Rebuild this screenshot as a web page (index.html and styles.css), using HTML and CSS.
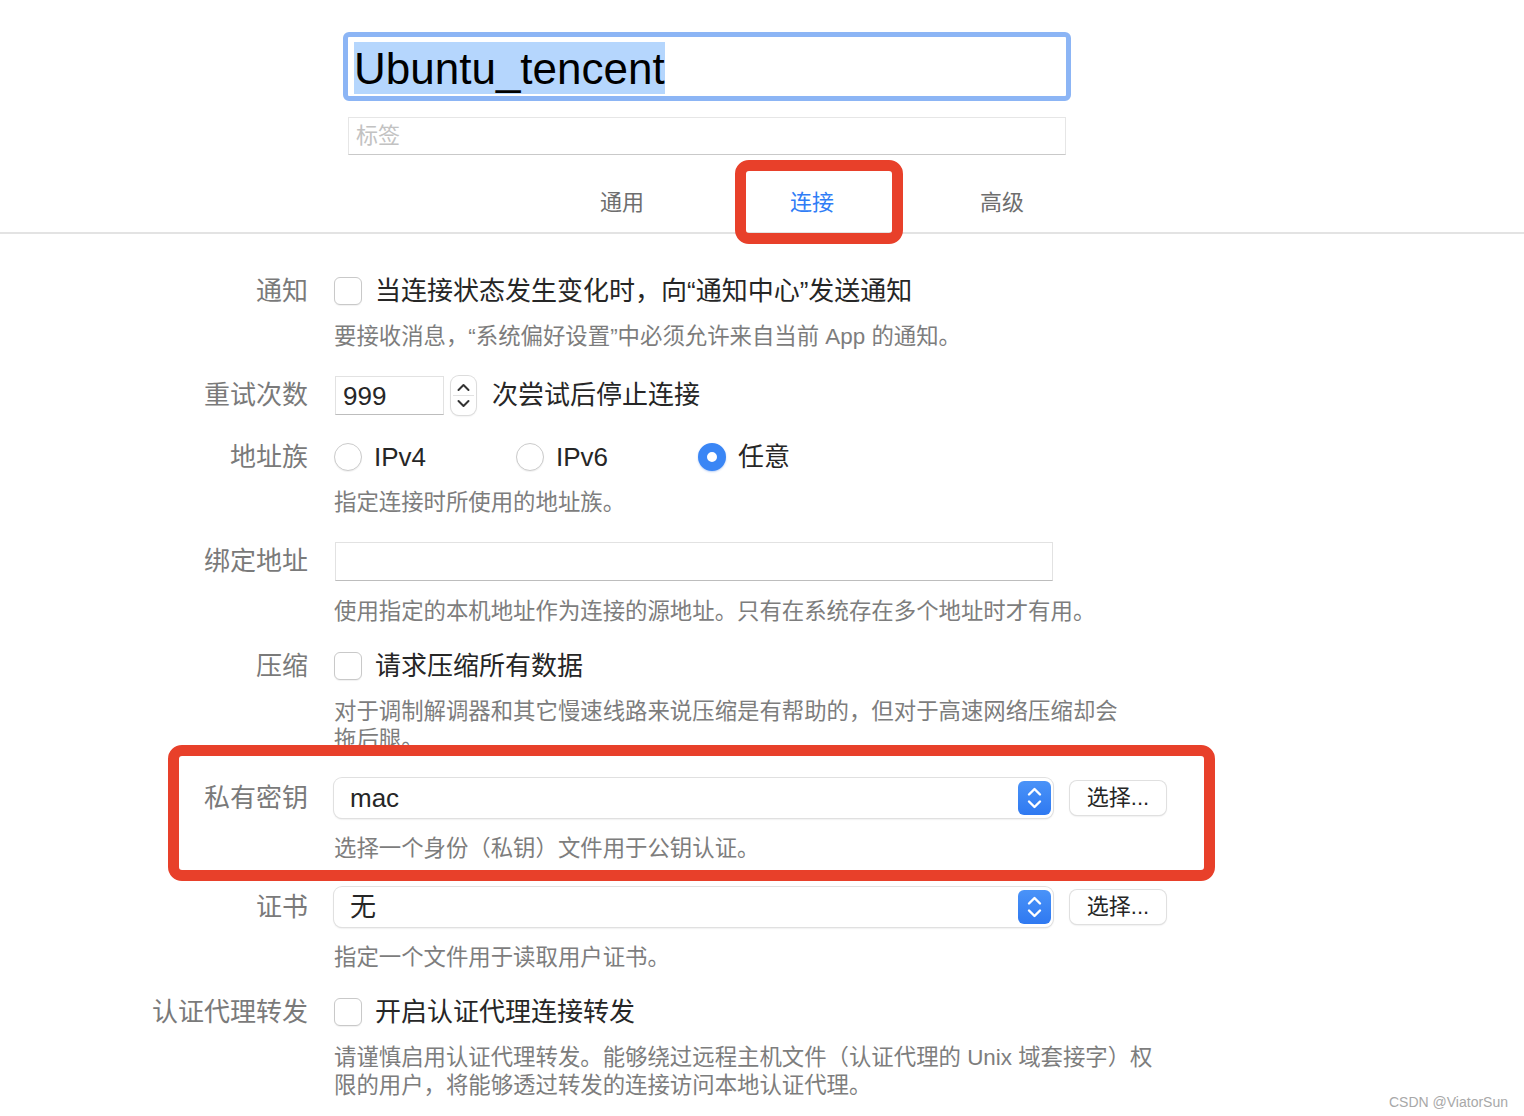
FILE: index.html
```html
<!DOCTYPE html>
<html lang="zh-CN">

<head>
    <meta charset="UTF-8">
    <link rel="stylesheet" href="styles.css">
    <title>Ubuntu_tencent</title>
</head>

<body>
    <div class="header">
        <div class="title-ring">
            <div class="title-box"><span class="title-sel">Ubuntu_tencent</span></div>
        </div>
        <div class="tag-input">标签</div>
    </div>

    <div class="tabs">
        <div class="tab">通用</div>
        <div class="tab tab-active">连接</div>
        <div class="tab">高级</div>
    </div>

    <div class="form">
        <!-- 通知 -->
        <div class="field">
            <div class="label">通知</div>
            <div class="control">
                <span class="check"></span>
                <span class="text">当连接状态发生变化时，向“通知中心”发送通知</span>
            </div>
            <div class="desc">要接收消息，“系统偏好设置”中必须允许来自当前 App 的通知。</div>
        </div>

        <!-- 重试次数 -->
        <div class="field field-mid">
            <div class="label">重试次数</div>
            <div class="control">
                <div class="num-input">999</div>
                <div class="stepper">
                    <svg width="25" height="39" viewBox="0 0 25 39">
                        <path d="M7.5 14 L12.5 9 L17.5 14" fill="none" stroke="#333" stroke-width="2" stroke-linecap="round" stroke-linejoin="round"/>
                        <line x1="2" y1="19.5" x2="23" y2="19.5" stroke="#e2e2e2" stroke-width="1"/>
                        <path d="M7.5 25 L12.5 30 L17.5 25" fill="none" stroke="#333" stroke-width="2" stroke-linecap="round" stroke-linejoin="round"/>
                    </svg>
                </div>
                <span class="text text-after-stepper">次尝试后停止连接</span>
            </div>
        </div>

        <!-- 地址族 -->
        <div class="field">
            <div class="label">地址族</div>
            <div class="control">
                <div class="radio-opt"><span class="radio"></span><span class="text">IPv4</span></div>
                <div class="radio-opt"><span class="radio"></span><span class="text">IPv6</span></div>
                <div class="radio-opt"><span class="radio radio-on"></span><span class="text">任意</span></div>
            </div>
            <div class="desc">指定连接时所使用的地址族。</div>
        </div>

        <!-- 绑定地址 -->
        <div class="field field-tight">
            <div class="label">绑定地址</div>
            <div class="control">
                <div class="text-input"></div>
            </div>
            <div class="desc desc-loose">使用指定的本机地址作为连接的源地址。只有在系统存在多个地址时才有用。</div>
        </div>

        <!-- 压缩 -->
        <div class="field">
            <div class="label">压缩</div>
            <div class="control">
                <span class="check"></span>
                <span class="text">请求压缩所有数据</span>
            </div>
            <div class="desc">对于调制解调器和其它慢速线路来说压缩是有帮助的，但对于高速网络压缩却会<br>拖后腿。</div>
        </div>

        <!-- 私有密钥 -->
        <div class="field">
            <div class="label">私有密钥</div>
            <div class="control">
                <div class="popup">
                    <span class="text">mac</span>
                    <span class="popup-arrows">
                        <svg width="33" height="34" viewBox="0 0 33 34">
                            <path d="M11 13.5 L16.5 8 L22 13.5" fill="none" stroke="#fff" stroke-width="2.4" stroke-linecap="round" stroke-linejoin="round"/>
                            <path d="M11 20.5 L16.5 26 L22 20.5" fill="none" stroke="#fff" stroke-width="2.4" stroke-linecap="round" stroke-linejoin="round"/>
                        </svg>
                    </span>
                </div>
                <div class="btn">选择...</div>
            </div>
            <div class="desc desc-loose">选择一个身份（私钥）文件用于公钥认证。</div>
        </div>

        <!-- 证书 -->
        <div class="field field-tight">
            <div class="label">证书</div>
            <div class="control">
                <div class="popup">
                    <span class="text">无</span>
                    <span class="popup-arrows">
                        <svg width="33" height="34" viewBox="0 0 33 34">
                            <path d="M11 13.5 L16.5 8 L22 13.5" fill="none" stroke="#fff" stroke-width="2.4" stroke-linecap="round" stroke-linejoin="round"/>
                            <path d="M11 20.5 L16.5 26 L22 20.5" fill="none" stroke="#fff" stroke-width="2.4" stroke-linecap="round" stroke-linejoin="round"/>
                        </svg>
                    </span>
                </div>
                <div class="btn">选择...</div>
            </div>
            <div class="desc desc-loose">指定一个文件用于读取用户证书。</div>
        </div>

        <!-- 认证代理转发 -->
        <div class="field">
            <div class="label">认证代理转发</div>
            <div class="control">
                <span class="check"></span>
                <span class="text">开启认证代理连接转发</span>
            </div>
            <div class="desc">请谨慎启用认证代理转发。能够绕过远程主机文件（认证代理的 Unix 域套接字）权<br>限的用户，将能够透过转发的连接访问本地认证代理。</div>
        </div>
    </div>

    <!-- 标注框 -->
    <div class="mark mark-tab"></div>
    <div class="mark mark-key"></div>

    <div class="watermark">CSDN @ViatorSun</div>
</body>

</html>
```

FILE: styles.css
```css
html {
    height: 100%;
    overflow: hidden;
}

body {
    margin: 0;
    height: 1116px;
    position: relative;
    overflow: hidden;
    background-color: #fff;
    color: #262626;
    font-family: "Liberation Sans", "Noto Sans CJK SC", sans-serif;
}

/* 顶部标题 */
.header {
    padding-top: 32px;
    margin-left: 343px;
    width: 728px;
}

.title-ring {
    height: 69px;
    box-sizing: border-box;
    border: 5px solid #8cb5f5;
    border-radius: 6px;
    background-color: #fff;
    padding: 5px 6px;
}

.title-sel {
    display: inline-block;
    height: 52px;
    line-height: 54px;
    font-size: 44px;
    color: #000;
    background-color: #b5d6fd;
}

.tag-input {
    margin: 16px 5px 0;
    height: 38px;
    box-sizing: border-box;
    border: 1px solid #e6e6e6;
    border-bottom-color: #c9c9c9;
    padding-left: 7px;
    line-height: 36px;
    font-size: 22px;
    color: #c2c2c2;
}

/* 标签页 */
.tabs {
    display: flex;
    margin-top: 15px;
    padding: 18px 0 14px 527px;
    border-bottom: 2px solid #e3e3e3;
}

.tab {
    width: 190px;
    text-align: center;
    font-size: 22px;
    line-height: 30px;
    color: #6e6e6e;
}

.tab-active {
    color: #2f7df6;
}

/* 表单 */
.form {
    padding-top: 37px;
}

.field {
    display: grid;
    grid-template-columns: 308px auto;
    column-gap: 26px;
    margin-bottom: 24px;
}

.field:last-child {
    margin-bottom: 0;
}

.field-mid {
    margin-bottom: 22px;
}

.field-tight {
    margin-bottom: 20px;
}

.label {
    text-align: right;
    font-size: 26px;
    line-height: 40px;
    color: #7a7a7a;
}

.control {
    display: flex;
    align-items: center;
    height: 40px;
}

.text {
    font-size: 26px;
    line-height: 40px;
    color: #262626;
}

.desc {
    grid-column: 2;
    margin-top: 12px;
    font-size: 22.4px;
    line-height: 28px;
    color: #7d7d7d;
}

.desc-loose {
    margin-top: 17px;
}

.check {
    width: 28px;
    height: 28px;
    box-sizing: border-box;
    border: 1px solid #c9c9c9;
    border-radius: 6px;
    background-color: #fff;
    box-shadow: 0 1px 1px rgba(0, 0, 0, 0.06);
    margin-right: 13px;
}

.radio-opt {
    display: flex;
    align-items: center;
    width: 182px;
}

.radio {
    width: 28px;
    height: 28px;
    box-sizing: border-box;
    border: 1px solid #cbcbcb;
    border-radius: 50%;
    background-color: #fff;
    box-shadow: 0 1px 1px rgba(0, 0, 0, 0.06);
    margin-right: 12px;
}

.radio-on {
    border: 9px solid #3a86f5;
    background-color: #fff;
    box-shadow: 0 1px 2px rgba(30, 100, 220, 0.3);
}

.num-input {
    margin-left: 1px;
    width: 109px;
    height: 39px;
    box-sizing: border-box;
    border: 1px solid #e2e2e2;
    border-bottom-color: #bdbdbd;
    padding-left: 7px;
    font-size: 26px;
    line-height: 38px;
}

.stepper {
    margin-left: 7px;
    width: 25px;
    height: 39px;
    border-radius: 8px;
    background-color: #fff;
    box-shadow: 0 0 0 1px #dcdcdc, 0 1px 2px rgba(0, 0, 0, 0.15);
}

.stepper svg {
    display: block;
}

.text-after-stepper {
    margin-left: 16px;
}

.text-input {
    margin-left: 1px;
    width: 718px;
    height: 39px;
    box-sizing: border-box;
    border: 1px solid #e2e2e2;
    border-bottom-color: #bdbdbd;
}

.popup {
    display: flex;
    align-items: center;
    justify-content: space-between;
    width: 719px;
    height: 40px;
    box-sizing: border-box;
    padding: 0 2px 0 16px;
    border-radius: 8px;
    background-color: #fff;
    box-shadow: 0 0 0 1px #e0e0e0, 0 1px 2px rgba(0, 0, 0, 0.18);
}

.popup-arrows {
    width: 33px;
    height: 34px;
    border-radius: 6px;
    background: linear-gradient(#4a93f8, #2f79f1);
}

.popup-arrows svg {
    display: block;
}

.btn {
    margin-left: 17px;
    width: 96px;
    height: 34px;
    border-radius: 7px;
    background-color: #fff;
    box-shadow: 0 0 0 1px #e0e0e0, 0 1px 2px rgba(0, 0, 0, 0.18);
    text-align: center;
    font-size: 22px;
    line-height: 33px;
    color: #262626;
}

/* 红色标注框 */
.mark {
    position: absolute;
    box-sizing: border-box;
    border: 11px solid #e8402a;
    border-radius: 14px;
}

.mark-tab {
    left: 735px;
    top: 160px;
    width: 168px;
    height: 84px;
}

.mark-key {
    left: 168px;
    top: 745px;
    width: 1047px;
    height: 136px;
}

.watermark {
    position: absolute;
    right: 16px;
    bottom: 6px;
    font-size: 14px;
    color: #a8a8a8;
}
```
